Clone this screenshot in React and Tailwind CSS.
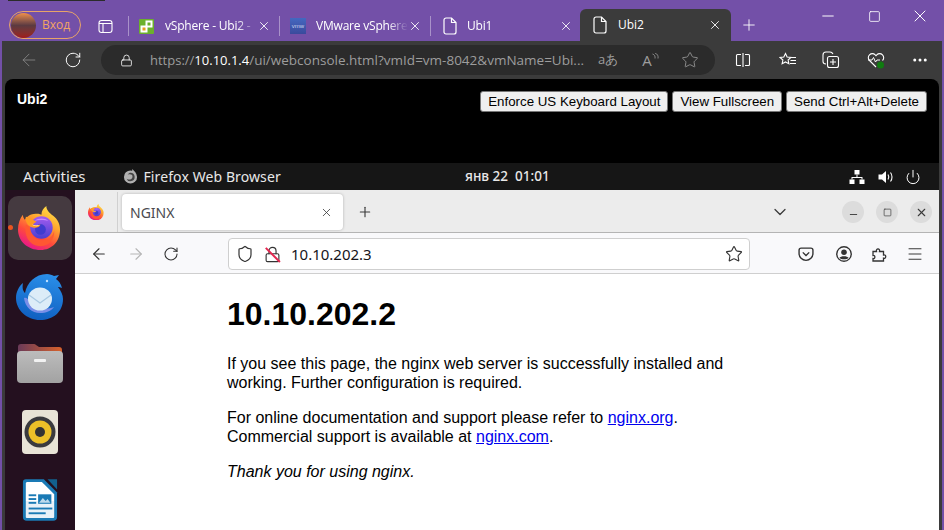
import { X, Plus, Minus, Square, ArrowLeft, ArrowRight, RotateCw, Star, Lock, Ellipsis, ChevronDown, Menu, Shield, Power } from 'lucide-react'

const PageIcon = () => (
  <svg width="14" height="18" viewBox="0 0 14 18" fill="none" stroke="#fff" strokeWidth="1.2" className="shrink-0">
    <path d="M1 3a2 2 0 0 1 2-2h5.500L13 5.500V15a2 2 0 0 1-2 2H3a2 2 0 0 1-2-2z" />
    <path d="M8.500 1v4.500H13" />
  </svg>
)

const VsphereIcon = () => (
  <svg width="15" height="15" viewBox="0 0 15 15" className="shrink-0 mr-[1px]">
    <rect width="15" height="15" rx="1" fill="#6cb02c" />
    <rect x="1.500" y="6.500" width="7" height="7" fill="#fff" />
    <rect x="3.500" y="8.500" width="3" height="3" fill="#e8a020" />
    <rect x="6.500" y="1.500" width="7" height="7" fill="#fff" />
    <rect x="8.500" y="3.500" width="3" height="3" fill="#6cb02c" />
  </svg>
)

const VmwIcon = () => (
  <div className="w-4 h-4 shrink-0 bg-gradient-to-b from-[#4468c0] to-[#3a4a9c] flex items-center justify-center text-[6px] leading-none text-[#c9d3ee] font-['Liberation_Sans',sans-serif]">vmw</div>
)

const Tab = ({ icon, title, iconPad }) => (
  <div className="flex items-center h-[32px] w-[151px]">
    <div className="w-px h-5 bg-[#a992c9] shrink-0" />
    <div className={`flex items-center pr-[8px] flex-1 min-w-0 ${iconPad}`}>
      {icon}
      <span className="ml-[10px] text-[12px] tracking-[-0.2px] text-white whitespace-nowrap overflow-hidden flex-1 [mask-image:linear-gradient(to_right,black_78%,transparent)]">{title}</span>
      <X size={14} strokeWidth={1.5} className="text-white shrink-0" />
    </div>
  </div>
)

const EdgeTitleBar = () => (
  <div className="h-[41px] shrink-0 flex items-end relative pl-[9px]">
    <div className="absolute left-[8px] top-0 w-[97px] h-px bg-[#2b2b2b]" />
    <div className="self-start mt-[11px] w-[72px] h-[28px] rounded-full border border-[#e8a468] flex items-center pl-[1px]">
      <div className="w-[25px] h-[25px] rounded-full bg-gradient-to-b from-[#f09048] via-[#5c3a40] to-[#a01818]" />
      <span className="ml-[6px] text-[12px] text-[#f2a564]">Вход</span>
    </div>
    <svg width="15" height="15" viewBox="0 0 15 15" fill="none" stroke="#fff" strokeWidth="1.100" className="ml-[17px] mb-[7px] shrink-0">
      <rect x="1" y="1.500" width="13" height="12" rx="2.500" />
      <path d="M1 4.500h13M5 4.500v9" />
    </svg>
    <div className="ml-[15px] flex mb-[-1px]">
      <Tab iconPad="pl-[10px]" icon={<VsphereIcon />} title="vSphere - Ubi2 -" />
      <Tab iconPad="pl-[10px]" icon={<VmwIcon />} title="VMware vSphere" />
      <Tab iconPad="pl-[12px]" icon={<PageIcon />} title="Ubi1" />
    </div>
    <div className="ml-[-1px] w-[151px] h-[32px] bg-[#3b3b3b] rounded-t-[6px] flex items-center pl-[13px] pr-[9px]">
      <PageIcon />
      <span className="ml-[11px] text-[12px] text-white flex-1">Ubi2</span>
      <X size={14} strokeWidth={1.5} className="text-white" />
    </div>
    <Plus size={18} strokeWidth={1.2} className="text-white ml-[9px] mb-[7px]" />
    <div className="ml-auto self-start flex items-center pt-[6px] pr-[1px] text-white">
      <div className="w-[46px] flex justify-center"><Minus size={18} strokeWidth={1.3} /></div>
      <div className="w-[46px] flex justify-center"><Square size={13} strokeWidth={1.5} /></div>
      <div className="w-[46px] flex justify-center"><X size={20} strokeWidth={1.2} /></div>
    </div>
  </div>
)

const EdgeToolbar = () => (
  <div className="h-[38px] shrink-0 bg-[#3b3b3b] flex items-center">
    <ArrowLeft size={20} strokeWidth={1} className="ml-[17px] text-[#8a8a8a]" />
    <RotateCw size={18} strokeWidth={1.300} className="ml-[25px] text-white" />
    <div className="ml-[19px] w-[614px] h-[30px] rounded-full bg-[#2b2b2b] flex items-center pl-[19px] text-[13px] text-[#9d9d9d]">
      <Lock size={13} strokeWidth={1.500} className="text-white shrink-0" />
      <span className="ml-[17px] whitespace-nowrap">https://<span className="text-white">10.10.1.4</span><span className="text-[13.500px]">/ui/webconsole.html?vmId=vm-8042&vmName=Ubi...</span></span>
      <span className="ml-[14px] text-[13px]">aあ</span>
      <span className="ml-[24px] flex items-start text-[#9d9d9d]">
        <span className="text-[15px] leading-none">A</span>
        <svg width="7" height="8" viewBox="0 0 7 8" fill="none" stroke="currentColor" strokeWidth="0.800"><path d="M0.500 1c2 .5 3 2.500 2.500 4.500M3 0c2.500 1 3.500 3 3 5.500" /></svg>
      </span>
      <Star size={18} strokeWidth={1.100} className="ml-[22px] shrink-0" />
    </div>
    <svg width="16" height="16" viewBox="0 0 16 16" fill="none" stroke="#fff" strokeWidth="1.100" className="ml-[20px]">
      <path d="M6 2.500H2.500a1 1 0 0 0-1 1v9a1 1 0 0 0 1 1H6M10 2.500h3.500a1 1 0 0 1 1 1v9a1 1 0 0 1-1 1H10M8 1v14" />
    </svg>
    <svg width="18" height="16" viewBox="0 0 18 16" fill="none" stroke="#fff" strokeWidth="1.100" className="ml-[28px]">
      <path d="M6.500 1.500l1.600 3.500 3.800.4-2.800 2.600.8 3.800-3.400-1.900-3.400 1.900.8-3.800L1 5.400l3.800-.4z" />
      <path d="M12 5.500h5M11.500 8.500h5.500M11 11.500h6" />
    </svg>
    <svg width="18" height="18" viewBox="0 0 18 18" fill="none" stroke="#fff" strokeWidth="1.100" className="ml-[25px]">
      <path d="M4 13c-2 0-3-1-3-2.500V4a3 3 0 0 1 3-3h4c1.500 0 2.500 1 3 2" />
      <rect x="5.500" y="5.500" width="11" height="11" rx="2" />
      <path d="M11 8v6M8 11h6" />
    </svg>
    <svg width="18" height="18" viewBox="0 0 18 18" fill="none" className="ml-[27px]">
      <path d="M9 16L2.500 9.500a4 4 0 0 1 0-5.700 4 4 0 0 1 5.700 0L9 4.600l.8-.8a4 4 0 0 1 5.700 0 4 4 0 0 1 0 5.700" stroke="#fff" strokeWidth="1.100" />
      <path d="M1 9h4l1.500-2.500 2 4.500 1.500-2h3" stroke="#fff" strokeWidth="1" />
      <circle cx="13.500" cy="14" r="3.500" fill="#107c10" />
    </svg>
    <Ellipsis size={18} strokeWidth={2} className="ml-[26px] text-white" />
  </div>
)

const ConsoleBar = () => (
  <div className="h-[84px] shrink-0 bg-black rounded-t-[8px] flex items-start pl-[12px] pr-[12px] pt-[12px] font-['Liberation_Sans',sans-serif]">
    <span className="text-[14px] leading-[16px] font-bold text-white">Ubi2</span>
    <div className="ml-auto flex gap-[4px]">
      {['Enforce US Keyboard Layout', 'View Fullscreen', 'Send Ctrl+Alt+Delete'].map((t) => (
        <button key={t} className="h-[21px] px-[7px] bg-[#efefef] border border-[#767676] rounded-[3px] text-[13.300px] leading-none text-black whitespace-nowrap">{t}</button>
      ))}
    </div>
  </div>
)

const GnomeBar = () => (
  <div className="h-[27px] shrink-0 bg-[#161616] flex items-center text-[#e8e8e8] font-['Noto_Sans',sans-serif]">
    <div className="w-[460px] flex items-center shrink-0">
      <span className="ml-[18px] text-[15px]">Activities</span>
      <svg width="15" height="15" viewBox="0 0 16 16" className="ml-[37px]">
        <circle cx="8" cy="8.500" r="7" fill="#b0b0b0" />
        <path d="M8 4a4.500 4.500 0 1 1-4.300 6C5 11.500 9 12 10 9S8 5 5 6c1-1.500 2-2 3-2z" fill="#444" />
        <path d="M10 0l3.500 4-4 0z" fill="#b0b0b0" />
      </svg>
      <span className="ml-[6px] text-[14px] tracking-[0.1px]">Firefox Web Browser</span>
    </div>
    <span className="text-[13.500px] font-medium whitespace-pre">янв 22  01:01</span>
    <div className="ml-auto flex items-center pr-[18px] text-white">
      <svg width="16" height="14" viewBox="0 0 16 14" fill="currentColor">
        <rect x="5.500" y="0" width="5" height="4.500" />
        <rect x="0.500" y="9.500" width="5" height="4.500" />
        <rect x="10.500" y="9.500" width="5" height="4.500" />
        <path d="M7.500 4.500h1V7H13.500V9.500h-1V8h-9v1.500h-1V7H7.500z" />
      </svg>
      <svg width="16" height="14" viewBox="0 0 16 14" className="ml-[13px]">
        <path d="M0.500 4.500H4L8 1v12L4 9.500H0.500z" fill="currentColor" />
        <path d="M10 4.500c1 1.500 1 3.500 0 5M12.500 2.500c2 2.500 2 6.500 0 9" fill="none" stroke="currentColor" strokeWidth="1.100" />
      </svg>
      <Power size={16} strokeWidth={1.500} className="ml-[11px]" />
    </div>
  </div>
)

const FirefoxLogo = ({ size, id }) => (
  <svg width={size} height={size * 46 / 44} viewBox="0 0 44 46">
    <defs>
      <linearGradient id={`${id}a`} x1="0.850" y1="0.050" x2="0.350" y2="1">
        <stop offset="0" stopColor="#ffe14a" />
        <stop offset="0.350" stopColor="#ffa82e" />
        <stop offset="0.700" stopColor="#ff4a3c" />
        <stop offset="1" stopColor="#e8188a" />
      </linearGradient>
      <linearGradient id={`${id}b`} x1="0.500" y1="0" x2="0.500" y2="1">
        <stop offset="0" stopColor="#a35cf0" />
        <stop offset="1" stopColor="#4b3fd0" />
      </linearGradient>
    </defs>
    <path d="M23 45C10 45 0 36 0 24 0 18 2 13 5 9c0 2 1 4 2 5 2-3 6-6 11-6 2 0 4 0 6 1 0-4 2-7 5-9 0 4 3 7 7 10 5 4 7 9 7 14 0 12-8 21-20 21z" fill={`url(#${id}a)`} />
    <circle cx="24" cy="22" r="11.500" fill={`url(#${id}b)`} />
    <path d="M17 15c4-3 10-3 14 0-4-1-10-1-14 0z" fill="#c88cff" />
    <circle cx="23" cy="24" r="5.500" fill="#3f3cd0" />
    <path d="M12 21c0 8 6 14 13 14 6 0 11-4 12-10 1 11-8 17-16 16C11 40 6 30 8 19z" fill="#ff5a30" opacity="0.900" />
    <path d="M8 11c4 0 6 3 11 5-2 1-3 2-4 3 2 1 5 1 8 0-1 3-5 4-8 3-5-1-8-6-7-11z" fill="#ff9a22" />
    <path d="M14 19c2 1 5 1 8 .5-2 1.500-5 2-8-.5z" fill="#ffe9b0" />
  </svg>
)

const Dock = () => (
  <div className="w-[70px] shrink-0 bg-[#24101f] flex flex-col items-center relative overflow-hidden">
    <div className="mt-[6px] w-[64px] h-[64px] shrink-0 rounded-[10px] bg-[#453a40] flex items-center justify-center pr-[2px]">
      <FirefoxLogo size={43} id="fxd" />
    </div>
    <div className="absolute left-[3px] top-[35px] w-[5px] h-[5px] rounded-full bg-[#e95420]" />
    <svg width="48" height="48" viewBox="0 0 48 48" className="mt-[13px] shrink-0">
      <defs>
        <linearGradient id="tb" x1="0.600" y1="0" x2="0.400" y2="1">
          <stop offset="0" stopColor="#2a8ee8" />
          <stop offset="1" stopColor="#0f5fc0" />
        </linearGradient>
      </defs>
      <path d="M24 47C11 47 0 37 0 25c0-6 3-12 7-15-1 5 0 8 2 10C11 10 19 1 31 1c3 0 5 1 7 2l5-1-3 4c3 2 5 5 6 9-2-1-3-1-4-1 3 4 5 8 5 12 0 13-10 21-23 21z" fill="url(#tb)" />
      <path d="M8 25c1 9 8 15 16 15 6 0 11-2 14-6-8 3-17 2-23-5-3-3-5-5-7-4z" fill="#7a8fe8" />
      <ellipse cx="24" cy="26" rx="12" ry="11.500" fill="#dcecf8" />
      <path d="M13 22l11 8 11-8" fill="none" stroke="#a8c8e2" strokeWidth="1.200" />
      <circle cx="31" cy="8" r="1.200" fill="#bfe0ff" />
    </svg>
    <svg width="46" height="40" viewBox="0 0 46 40" className="mt-[22px] shrink-0">
      <defs>
        <linearGradient id="fl" x1="0" y1="0" x2="1" y2="0">
          <stop offset="0" stopColor="#6a3a58" />
          <stop offset="1" stopColor="#d8622c" />
        </linearGradient>
        <linearGradient id="fb" x1="0" y1="0" x2="0" y2="1">
          <stop offset="0" stopColor="#bcbcbc" />
          <stop offset="1" stopColor="#a2a2a2" />
        </linearGradient>
      </defs>
      <path d="M1 4a3 3 0 0 1 3-3h13a3 3 0 0 1 2 1l3 2h20a3 3 0 0 1 3 3v10H1z" fill="url(#fl)" />
      <rect x="0" y="8" width="46" height="32" rx="4" fill="url(#fb)" />
      <rect x="17" y="16" width="12" height="3" rx="1" fill="#f2f2f2" />
    </svg>
    <div className="mt-[27px] w-[36px] h-[44px] shrink-0 rounded-[4px] bg-[#e8e3d6] flex items-center justify-center">
      <svg width="32" height="32" viewBox="0 0 32 32">
        <circle cx="16" cy="16" r="15.500" fill="#3a3a3e" />
        <circle cx="16" cy="16" r="11.500" fill="#ecc028" />
        <circle cx="16" cy="16" r="5" fill="#333" />
      </svg>
    </div>
    <svg width="36" height="44" viewBox="0 0 38 46" className="mt-[24px] shrink-0">
      <path d="M4 1h19l14 14v26a4 4 0 0 1-4 4H5a4 4 0 0 1-4-4V4a3 3 0 0 1 3-3z" fill="#1a7ab5" />
      <path d="M5 4h16l13 13v7H4V5z" fill="#fff" />
      <path d="M4 24h30v17a1 1 0 0 1-1 1H5a1 1 0 0 1-1-1z" fill="#e8f1f8" />
      <path d="M27 1h10v11z" fill="#12608e" />
      <rect x="7" y="17" width="8" height="2" fill="#1a7ab5" />
      <rect x="7" y="21" width="8" height="2" fill="#1a7ab5" />
      <rect x="7" y="25" width="8" height="2" fill="#1a7ab5" />
      <rect x="17" y="17" width="14" height="10" fill="#1a7ab5" />
      <path d="M18 26l4-5 3 3 2-2 3 4z" fill="#bcd9ec" />
      <rect x="7" y="31" width="25" height="2" fill="#1a7ab5" />
      <rect x="7" y="36" width="18" height="2" fill="#1a7ab5" />
    </svg>
  </div>
)

const FirefoxWindow = () => (
  <div className="flex-1 min-w-0 flex flex-col bg-white">
    <div className="h-[43px] shrink-0 pt-[2px] bg-[#ececec] border-b border-[#b4b4b4] flex items-center text-[#3a3a3a]">
      <div className="w-[43px] h-full border-r border-[#d0d0d0] flex items-center justify-center">
        <FirefoxLogo size={16} id="fxt" />
      </div>
      <div className="ml-[4px] w-[221px] h-[36px] bg-white rounded-[4px] shadow-[0_0_3px_rgba(0,0,0,0.25)] flex items-center pl-[8px] pr-[10px]">
        <span className="text-[14px] text-[#4a4a4f] flex-1 font-['Noto_Sans',sans-serif]">NGINX</span>
        <X size={13} strokeWidth={1.500} />
      </div>
      <Plus size={16} strokeWidth={1.700} className="ml-[14px]" />
      <ChevronDown size={20} strokeWidth={1.500} className="ml-[397px]" />
      <div className="ml-auto mr-[7px] flex gap-[12px]">
        <div className="w-[22px] h-[22px] rounded-full bg-[#dcdcdc] flex items-center justify-center"><Minus size={11} strokeWidth={2} className="mt-[5px]" /></div>
        <div className="w-[22px] h-[22px] rounded-full bg-[#dcdcdc] flex items-center justify-center"><Square size={9} strokeWidth={1.800} /></div>
        <div className="w-[22px] h-[22px] rounded-full bg-[#dcdcdc] flex items-center justify-center"><X size={13} strokeWidth={2} /></div>
      </div>
    </div>
    <div className="h-[41px] shrink-0 pt-[2px] bg-[#f9f9fb] border-b border-[#cfcfcf] flex items-center text-[#333]">
      <ArrowLeft size={18} strokeWidth={1.500} className="ml-[15px]" />
      <ArrowRight size={18} strokeWidth={1.500} className="ml-[19px] text-[#b5b5b5]" />
      <RotateCw size={16} strokeWidth={1.600} className="ml-[18px]" />
      <div className="ml-[49px] w-[522px] h-[32px] bg-white border border-[#cfcfcf] rounded-[4px] flex items-center pl-[7px] pr-[6px]">
        <Shield size={18} strokeWidth={1.600} />
        <div className="ml-[10px] relative flex">
          <Lock size={17} strokeWidth={1.600} />
          <div className="absolute left-[-1px] top-[8px] w-[20px] h-[1.500px] bg-[#e22850] rotate-45" />
        </div>
        <span className="ml-[10px] text-[15px] text-[#15141a] flex-1 font-['Noto_Sans',sans-serif]">10.10.202.3</span>
        <Star size={18} strokeWidth={1.500} />
      </div>
      <div className="ml-[48px] flex items-center">
        <svg width="16" height="15" viewBox="0 0 15 14" fill="none" stroke="#333" strokeWidth="1.300">
          <path d="M1 3a2 2 0 0 1 2-2h9a2 2 0 0 1 2 2v3a6.500 6.500 0 0 1-13 0z" />
          <path d="M4.500 5l3 3 3-3" />
        </svg>
        <svg width="16" height="16" viewBox="0 0 15 15" className="ml-[22px]">
          <circle cx="7.500" cy="7.500" r="6.800" fill="none" stroke="#333" strokeWidth="1.300" />
          <circle cx="7.500" cy="5.800" r="2.600" fill="#333" />
          <path d="M3.200 11c1-2 7.600-2 8.600 0-1.500 2-7 2-8.600 0z" fill="#333" />
        </svg>
        <svg width="16" height="16" viewBox="0 0 16 16" fill="none" stroke="#333" strokeWidth="1.300" className="ml-[19px]">
          <path d="M2 5.500h3.500C4.500 2 9.500 2 8.500 5.500H12.500V9c3-.8 3 4 0 3.200V15H2v-2.500c2.500 .5 2.500-3.500 0-3z" />
        </svg>
        <Menu size={18} strokeWidth={1.300} className="ml-[19px]" />
      </div>
    </div>
    <div className="flex-1 overflow-hidden pl-[152px] pt-[22px] text-[16px] leading-[18.500px] text-black font-['Liberation_Sans',sans-serif]">
      <h1 className="text-[32px] leading-[37px] font-bold">10.10.202.2</h1>
      <p className="mt-[22px] w-[500px]">If you see this page, the nginx web server is successfully installed and working. Further configuration is required.</p>
      <p className="mt-[17px] w-[500px]">For online documentation and support please refer to <a className="text-[#0000ee] underline">nginx.org</a>.<br />Commercial support is available at <a className="text-[#0000ee] underline">nginx.com</a>.</p>
      <p className="mt-[17px] italic">Thank you for using nginx.</p>
    </div>
  </div>
)

export default function App() {
  return (
    <div className="w-[944px] h-[530px] overflow-hidden flex flex-col bg-[#7350a8] font-['Open_Sans','Noto_Sans',sans-serif]">
      <EdgeTitleBar />
      <div className="flex-1 min-h-0 flex flex-col mx-[2px] bg-[#3b3b3b]">
        <EdgeToolbar />
        <div className="flex-1 min-h-0 flex flex-col pl-[3px] pr-[3px]">
          <ConsoleBar />
          <GnomeBar />
          <div className="flex-1 min-h-0 flex">
            <Dock />
            <FirefoxWindow />
          </div>
        </div>
      </div>
    </div>
  )
}
